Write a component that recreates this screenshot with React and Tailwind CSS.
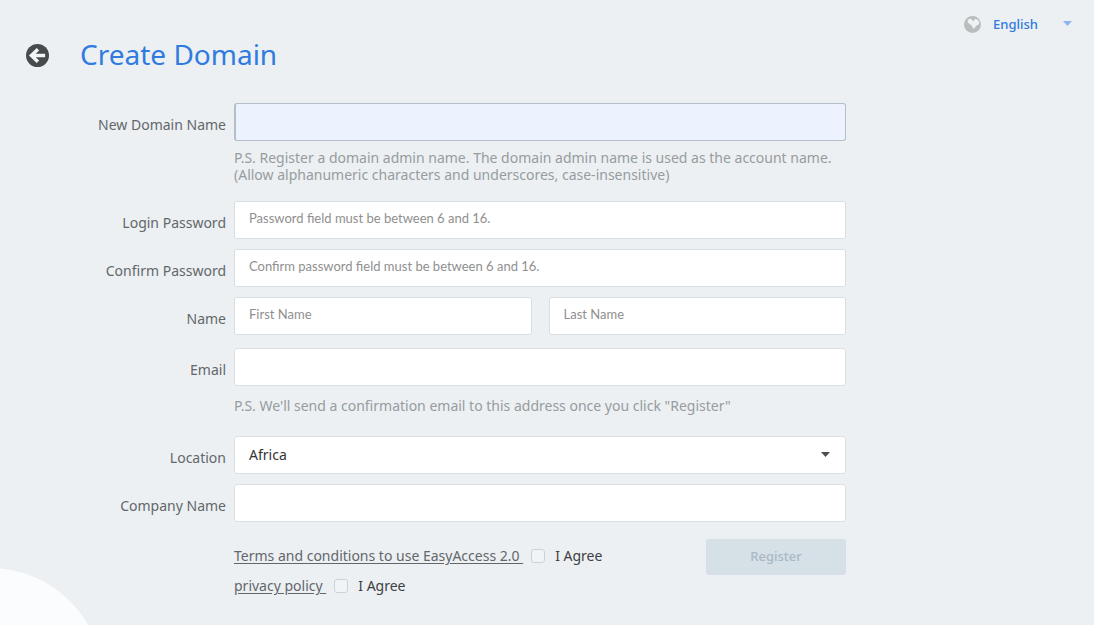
import React, { useState } from "react";

const fieldClass =
  "block w-full h-[38px] rounded-[3px] border border-[#d9e0e4] bg-white px-3.5 outline-none focus:border-[#b4bfca]";

const inputClass =
  "pb-1 font-[Lato,sans-serif] text-[13px] text-[#333] placeholder:text-[#8f8f8f]";

const locations = ["Africa", "Asia", "Europe", "North America", "Oceania", "South America"];

const Caret = ({ className }) => (
  <svg viewBox="0 0 10 5" preserveAspectRatio="none" className={`pointer-events-none absolute ${className}`} aria-hidden="true">
    <path d="M0 0h10L5 5z" fill="currentColor" />
  </svg>
);

const BackIcon = () => (
  <svg width="23" height="23" viewBox="0 0 22 22" aria-hidden="true">
    <circle cx="11" cy="11" r="11" fill="#484b4c" />
    <path d="M5.5 11h12.8M11.4 5L5.2 11l6.2 6" fill="none" stroke="#f3f6f8" strokeWidth="3.3" />
  </svg>
);

const GlobeIcon = () => (
  <svg width="17" height="17" viewBox="0 0 17 17" aria-hidden="true">
    <circle cx="8.5" cy="8.5" r="8.5" fill="#b9bdbe" />
    <path
      d="M3.6 4.2L6 2.6l1.8.8.8 1.6 1.6-.4L11 2.8l2.4.6 1.8 2.4-.2 2.4-2.4 1.4-1.8 2.2-1.6 1.2-.8-2.4L5.6 8 3.8 6.4z"
      fill="#eef2f4"
    />
  </svg>
);

const Row = ({ label, htmlFor, children }) => (
  <div className="grid grid-cols-[226px_minmax(0,1fr)] gap-x-2">
    <label htmlFor={htmlFor} className="pt-3 text-right text-sm leading-5 text-[#63676a]">
      {label}
    </label>
    <div>{children}</div>
  </div>
);

const Agreement = ({ id, text, checked, onChange }) => (
  <div className="flex h-[30px] items-center text-sm">
    <a href="#" className="whitespace-pre text-[#63676a] underline underline-offset-2">
      {text + " "}
    </a>
    <input
      id={id}
      type="checkbox"
      checked={checked}
      onChange={(e) => onChange(e.target.checked)}
      className="ml-2 size-3.5 appearance-none rounded-[3px] border border-[#cdd2d4] bg-[#f1f4f6] checked:bg-[#2f7be6]"
    />
    <label htmlFor={id} className="ml-2.5 text-[#3c4042]">
      I Agree
    </label>
  </div>
);

const App = () => {
  const [form, setForm] = useState({
    domain: "",
    password: "",
    confirm: "",
    firstName: "",
    lastName: "",
    email: "",
    location: "Africa",
    company: "",
  });
  const [terms, setTerms] = useState(false);
  const [privacy, setPrivacy] = useState(false);

  const update = (e) => setForm({ ...form, [e.target.name]: e.target.value });

  return (
    <div className="relative min-h-screen overflow-hidden bg-[#ecf0f3] font-['Noto_Sans',sans-serif]">
      <div className="absolute -bottom-[169px] -left-[123px] size-[226px] rounded-full bg-[#fafcfd]" />

      <header className="flex items-start justify-between pl-[26px] pr-[22px]">
        <div className="flex items-center gap-[31px] pt-[34px]">
          <button type="button" aria-label="Back" className="pt-0.5">
            <BackIcon />
          </button>
          <h1 className="text-[28px] leading-10 text-[#2f7bdf]">Create Domain</h1>
        </div>
        <div className="flex items-center gap-3 pt-3.5">
          <GlobeIcon />
          <div className="relative">
            <select
              aria-label="Language"
              className="block w-[79px] appearance-none bg-transparent text-[13px] leading-5 font-medium text-[#2f7bdf] outline-none"
            >
              <option>English</option>
            </select>
            <Caret className="right-0 top-[7px] h-[5px] w-[9px] text-[#8db4ee]" />
          </div>
        </div>
      </header>

      <form onSubmit={(e) => e.preventDefault()} className="relative w-full max-w-[846px] pt-[29px] pb-5">
        <Row label="New Domain Name" htmlFor="domain">
          <input
            id="domain"
            name="domain"
            value={form.domain}
            onChange={update}
            className="block h-[38px] w-full rounded-[3px] border border-l-2 border-[#b4bfca] bg-[#ecf3ff] px-3.5 text-[13px] outline-none"
          />
          <p className="mt-2 text-sm leading-[17px] text-[#979c9e]">
            P.S. Register a domain admin name. The domain admin name is used as the account name.
            <br />
            (Allow alphanumeric characters and underscores, case-insensitive)
          </p>
        </Row>

        <div className="mt-[18px] flex flex-col gap-[10px]">
          <Row label="Login Password" htmlFor="password">
            <input
              id="password"
              name="password"
              type="password"
              value={form.password}
              onChange={update}
              placeholder="Password field must be between 6 and 16."
              className={`${fieldClass} ${inputClass}`}
            />
          </Row>
          <Row label="Confirm Password" htmlFor="confirm">
            <input
              id="confirm"
              name="confirm"
              type="password"
              value={form.confirm}
              onChange={update}
              placeholder="Confirm password field must be between 6 and 16."
              className={`${fieldClass} ${inputClass}`}
            />
          </Row>
          <Row label="Name" htmlFor="firstName">
            <div className="grid grid-cols-2 gap-[17px]">
              <input
                id="firstName"
                name="firstName"
                value={form.firstName}
                onChange={update}
                placeholder="First Name"
                className={`${fieldClass} ${inputClass}`}
              />
              <input
                name="lastName"
                aria-label="Last Name"
                value={form.lastName}
                onChange={update}
                placeholder="Last Name"
                className={`${fieldClass} ${inputClass}`}
              />
            </div>
          </Row>
        </div>

        <div className="mt-[13px]">
          <Row label="Email" htmlFor="email">
            <input
              id="email"
              name="email"
              type="email"
              value={form.email}
              onChange={update}
              className={`${fieldClass} ${inputClass}`}
            />
            <p className="mt-[11px] text-sm leading-[17px] text-[#979c9e]">
              P.S. We'll send a confirmation email to this address once you click "Register"
            </p>
          </Row>
        </div>

        <div className="mt-[22px] flex flex-col gap-[10px]">
          <Row label="Location" htmlFor="location">
            <div className="relative">
              <select
                id="location"
                name="location"
                value={form.location}
                onChange={update}
                className={`${fieldClass} appearance-none text-sm text-[#333]`}
              >
                {locations.map((l) => (
                  <option key={l}>{l}</option>
                ))}
              </select>
              <Caret className="right-4 top-4 h-[5px] w-[9px] text-[#4c4f50]" />
            </div>
          </Row>
          <Row label="Company Name" htmlFor="company">
            <input
              id="company"
              name="company"
              value={form.company}
              onChange={update}
              className={`${fieldClass} ${inputClass}`}
            />
          </Row>
        </div>

        <div className="mt-[17px] flex items-start justify-between pl-[234px]">
          <div className="pt-0.5">
            <Agreement id="terms" text="Terms and conditions to use EasyAccess 2.0" checked={terms} onChange={setTerms} />
            <Agreement id="privacy" text="privacy policy" checked={privacy} onChange={setPrivacy} />
          </div>
          <button
            type="submit"
            disabled={!terms || !privacy}
            className="h-9 w-[140px] rounded-[3px] bg-[#2f7bdf] text-[13px] font-medium text-white disabled:bg-[#d5e0e7] disabled:text-[#a9b9c5]"
          >
            Register
          </button>
        </div>
      </form>
    </div>
  );
};

export default App;
